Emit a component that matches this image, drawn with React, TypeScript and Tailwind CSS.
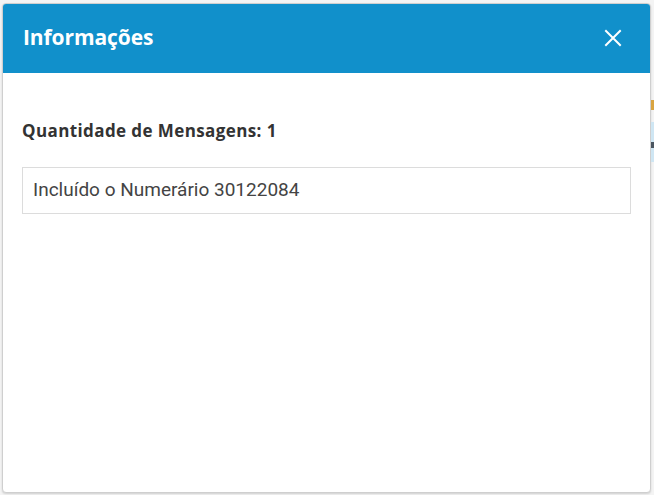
import React from 'react';

const App: React.FC = () => {
  return (
    <div className="w-[654px] h-[495px] bg-[#f4f4f4] overflow-hidden flex pl-[2px] pt-[3px]">
      {/* MODAL */}
      <div
        className="w-[649px] h-[490px] shrink-0 flex flex-col bg-white rounded-[4px] border border-[#cfcfcf] shadow-[0_1px_2px_rgba(0,0,0,0.15)] overflow-hidden"
        style={{ fontFamily: '"Open Sans", "Noto Sans", sans-serif' }}
      >
        <div className="h-[69px] shrink-0 bg-[#1190cb] flex items-center justify-between pl-[20px] pr-[28px]">
          <h4 className="text-white text-[21px] font-bold tracking-[-0.1px] pb-[2px]">Informações</h4>
          <svg width="18" height="18" viewBox="0 0 18 18" className="mb-[2px]">
            <path d="M2 2 L16 16 M16 2 L2 16" stroke="white" strokeWidth="2" strokeLinecap="square" />
          </svg>
        </div>

        <div className="px-[19px] pt-[47px]">
          <p className="text-[17px] font-bold text-[#333] leading-[22px] tracking-[0.4px]">Quantidade de Mensagens: 1</p>
          <div className="mt-[25px] h-[47px] border border-[#dcdcdc] flex items-center px-[10px]">
            <span className="text-[19px] text-[#444]" style={{ fontFamily: 'Roboto, "Liberation Sans", sans-serif' }}>
              Incluído o Numerário 30122084
            </span>
          </div>
        </div>
      </div>

      {/* background page bits peeking out on the right */}
      <div className="flex flex-col pt-[97px] w-[3px]">
        <div className="h-[10px] bg-[#d9a441]" />
        <div className="h-[12px]" />
        <div className="h-[20px] bg-[#cfe6f3]" />
        <div className="h-[6px] bg-[#4a5560]" />
        <div className="h-[14px] bg-[#cfe6f3]" />
      </div>
    </div>
  );
};

export default App;
